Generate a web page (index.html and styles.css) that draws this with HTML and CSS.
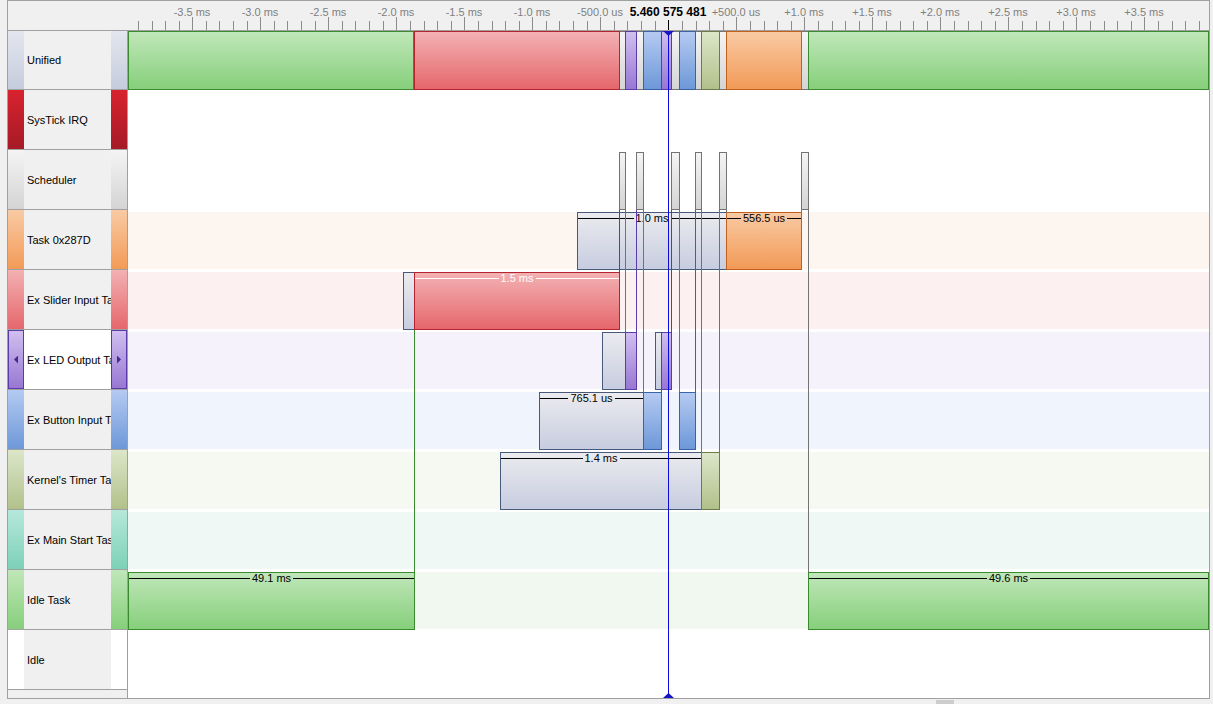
FILE: index.html
```html
<!DOCTYPE html>
<html lang="en">
<head>
  <meta charset="UTF-8" />
  <title>Timeline</title>
  <link rel="stylesheet" href="styles.css">
</head>
<body>
  <div class="frame">
    <div class="ruler">
      <div class="ruler-gap"></div>
      <div class="scale" id="scale">
        <span class="now">5.460 575 481</span>
      </div>
    </div>

    <div class="main">
      <div class="names">
        <div class="name c-unified"><i class="strip"></i><span>Unified</span><i class="strip"></i></div>
        <div class="name c-systick"><i class="strip"></i><span>SysTick IRQ</span><i class="strip"></i></div>
        <div class="name c-sched"><i class="strip"></i><span>Scheduler</span><i class="strip"></i></div>
        <div class="name c-task"><i class="strip"></i><span>Task 0x287D</span><i class="strip"></i></div>
        <div class="name c-slider"><i class="strip"></i><span>Ex Slider Input Task</span><i class="strip"></i></div>
        <div class="name c-led sel"><i class="strip prev"></i><span>Ex LED Output Task</span><i class="strip next"></i></div>
        <div class="name c-button"><i class="strip"></i><span>Ex Button Input Task</span><i class="strip"></i></div>
        <div class="name c-kernel"><i class="strip"></i><span>Kernel's Timer Task</span><i class="strip"></i></div>
        <div class="name c-main"><i class="strip"></i><span>Ex Main Start Task</span><i class="strip"></i></div>
        <div class="name c-idletask"><i class="strip"></i><span>Idle Task</span><i class="strip"></i></div>
        <div class="name c-idle"><i class="strip"></i><span>Idle</span><i class="strip"></i></div>
        <div class="name-foot"></div>
      </div>

      <div class="chart">
        <!-- unified -->
        <div class="lane">
          <i class="bar c-sched" style="left:491px;width:7px"></i>
          <i class="bar c-sched" style="left:508px;width:8px"></i>
          <i class="bar c-sched" style="left:543px;width:9px"></i>
          <i class="bar c-sched" style="left:567px;width:7px"></i>
          <i class="bar c-sched" style="left:591px;width:8px"></i>
          <i class="bar c-sched" style="left:673px;width:8px"></i>
          <i class="bar c-idletask" style="left:0;width:286px"></i>
          <i class="bar c-slider" style="left:286px;width:206px"></i>
          <i class="bar c-led" style="left:497px;width:12px"></i>
          <i class="bar c-button" style="left:515px;width:19px"></i>
          <i class="bar c-led" style="left:533px;width:11px"></i>
          <i class="bar c-button" style="left:551px;width:17px"></i>
          <i class="bar c-kernel" style="left:573px;width:19px"></i>
          <i class="bar c-task" style="left:598px;width:76px"></i>
          <i class="bar c-idletask" style="left:680px;width:401px"></i>
        </div>
        <!-- systick -->
        <div class="lane c-systick"></div>
        <!-- scheduler -->
        <div class="lane">
          <i class="bar c-sched" style="left:491px;width:7px"></i>
          <i class="bar c-sched" style="left:508px;width:8px"></i>
          <i class="bar c-sched" style="left:543px;width:9px"></i>
          <i class="bar c-sched" style="left:567px;width:7px"></i>
          <i class="bar c-sched" style="left:591px;width:8px"></i>
          <i class="bar c-sched" style="left:673px;width:8px"></i>
        </div>
        <!-- task 0x287D -->
        <div class="lane c-task">
          <div class="tint"></div>
          <i class="bar ready" style="left:449px;width:150px"><b class="dur"><span>1.0 ms</span></b></i>
          <i class="bar c-task" style="left:598px;width:76px"><b class="dur"><span>556.5 us</span></b></i>
        </div>
        <!-- slider -->
        <div class="lane c-slider">
          <div class="tint"></div>
          <i class="bar ready" style="left:275px;width:12px"></i>
          <i class="bar c-slider" style="left:286px;width:206px"><b class="dur light"><span>1.5 ms</span></b></i>
        </div>
        <!-- led -->
        <div class="lane c-led">
          <div class="tint"></div>
          <i class="bar ready" style="left:474px;width:24px"></i>
          <i class="bar c-led" style="left:497px;width:12px"></i>
          <i class="bar ready" style="left:527px;width:7px"></i>
          <i class="bar c-led" style="left:533px;width:11px"></i>
        </div>
        <!-- button -->
        <div class="lane c-button">
          <div class="tint"></div>
          <i class="bar ready" style="left:411px;width:105px"><b class="dur"><span>765.1 us</span></b></i>
          <i class="bar c-button" style="left:515px;width:19px"></i>
          <i class="bar c-button" style="left:551px;width:17px"></i>
        </div>
        <!-- kernel timer -->
        <div class="lane c-kernel">
          <div class="tint"></div>
          <i class="bar ready" style="left:372px;width:202px"><b class="dur"><span>1.4 ms</span></b></i>
          <i class="bar c-kernel" style="left:573px;width:19px"></i>
        </div>
        <!-- main start -->
        <div class="lane c-main">
          <div class="tint"></div>
        </div>
        <!-- idle task -->
        <div class="lane c-idletask">
          <div class="tint"></div>
          <i class="bar c-idletask" style="left:0;width:287px"><b class="dur"><span>49.1 ms</span></b></i>
          <i class="bar c-idletask" style="left:680px;width:401px"><b class="dur"><span>49.6 ms</span></b></i>
        </div>
        <!-- idle -->
        <div class="lane"></div>
        <div class="lane-foot"></div>

        <!-- context switches -->
        <i class="link c-idletask" style="left:286px;top:299px;height:242px"></i>
        <i class="link c-slider" style="left:491px;top:179px;height:62px"></i>
        <i class="link c-sched" style="left:497px;top:179px;height:122px"></i>
        <i class="link c-led" style="left:508px;top:179px;height:122px"></i>
        <i class="link c-sched" style="left:515px;top:179px;height:182px"></i>
        <i class="link c-button" style="left:533px;top:358px;height:4px"></i>
        <i class="link c-led" style="left:543px;top:179px;height:122px"></i>
        <i class="link c-sched" style="left:551px;top:179px;height:182px"></i>
        <i class="link c-button" style="left:567px;top:179px;height:182px"></i>
        <i class="link c-sched" style="left:573px;top:179px;height:242px"></i>
        <i class="link c-kernel" style="left:591px;top:179px;height:242px"></i>
        <i class="link c-sched" style="left:598px;top:179px;height:3px"></i>
        <i class="link c-task" style="left:673px;top:179px;height:3px"></i>
        <i class="link c-sched" style="left:680px;top:179px;height:362px"></i>

        <div class="cursor"></div>
      </div>
    </div>
  </div>
  <div class="hscroll"><div class="thumb"></div></div>

  <script>
    // ruler: 0.1 ms per minor tick, 136 px per ms
    const scale=document.getElementById("scale");
    const zero=540.3, step=13.6;
    for(let k=-39;k<=39;k++){
      const x=Math.round(zero+k*step);
      const tick=document.createElement("i");
      tick.className="tick"+(k%5===0?" major":"")+(k===0?" cur":"");
      tick.style.left=x+"px";
      scale.appendChild(tick);
      if(k%5===0&&k!==0){
        const ms=k/10;
        const txt=Math.abs(ms)<1?(ms*1000).toFixed(1)+" us":ms.toFixed(1)+" ms";
        const lbl=document.createElement("span");
        lbl.className="lbl";
        lbl.textContent=(k>0?"+":"")+txt;
        lbl.style.left=x+"px";
        scale.appendChild(lbl);
      }
    }
  </script>
</body>
</html>
```

FILE: styles.css
```css
*{box-sizing:border-box;}
body{margin:0;height:704px;overflow:hidden;background:#f0f0f0;font-family:"Liberation Sans",Arial,sans-serif;font-size:11px;color:#000;}
i,b{font-style:normal;font-weight:normal;}

/* task colours */
.c-unified{--hi:#e3e6ef;--lo:#c5ccdc;--bd:#8a93a8;}
.c-systick{--hi:#d8222f;--lo:#a51b26;--bd:#8a1720;}
.c-sched{--hi:#f4f4f4;--lo:#d4d4d4;--bd:#737373;}
.c-task{--hi:#f9caa3;--lo:#f29a57;--bd:#c2601c;--tint:#fdf5ef;}
.c-slider{--hi:#f3b1b3;--lo:#e5676c;--bd:#b52430;--tint:#fcf0f0;}
.c-led{--hi:#d0bfef;--lo:#9877d3;--bd:#5a3ca8;--tint:#f5f2fb;}
.c-button{--hi:#b5caf2;--lo:#6d98d8;--bd:#3a62a8;--tint:#f0f4fc;}
.c-kernel{--hi:#dce6c9;--lo:#b1c18b;--bd:#6d7a4a;--tint:#f6f8f2;}
.c-main{--hi:#b6e8d9;--lo:#7dd1b7;--bd:#3f9a80;--tint:#eff8f5;}
.c-idletask{--hi:#c0e7b9;--lo:#86cf7b;--bd:#3b8a30;--tint:#f1f8f0;}
.c-idle{--hi:#fff;--lo:#fff;--bd:#fff;}
.ready{--hi:#ebebef;--lo:#c7cde0;--bd:#485a7c;}

.frame{margin-left:7px;width:1203px;height:699px;border:1px solid #a0a0a0;background:#fff;display:flex;flex-direction:column;}

/* ruler */
.ruler{height:30px;flex:none;display:flex;background:#f0f0f0;border-bottom:1px solid #a0a0a0;}
.ruler-gap{width:120px;flex:none;}
.scale{flex:1;position:relative;}
.tick{position:absolute;bottom:0;width:1px;height:9px;background:#8c8c8c;}
.tick.major{height:13px;}
.tick.cur{height:10px;background:#000;}
.lbl{position:absolute;top:5px;transform:translateX(-50%);line-height:13px;color:#808080;white-space:nowrap;}
.now{position:absolute;left:540px;top:4px;transform:translateX(-50%);font-size:12px;line-height:14px;font-weight:bold;white-space:nowrap;}

.main{flex:1;display:flex;min-height:0;}

/* names column */
.names{width:120px;flex:none;display:flex;flex-direction:column;background:#f0f0f0;border-right:1px solid #a0a0a0;}
.name{height:60px;flex:none;display:flex;border-bottom:1px solid #a0a0a0;}
.name:first-child{height:59px;}
.name span{flex:1;min-width:0;display:flex;align-items:center;padding-left:3px;overflow:hidden;white-space:nowrap;}
.strip{width:16px;flex:none;display:flex;align-items:center;justify-content:center;background:linear-gradient(var(--hi),var(--lo));}
.sel span{background:#fff;}
.sel .strip{border:1px solid var(--bd);}
.strip.prev::after,.strip.next::after{content:"";width:4px;height:8px;background:#452c8c;}
.strip.prev::after{clip-path:polygon(100% 0,100% 100%,0 50%);}
.strip.next::after{clip-path:polygon(0 0,100% 50%,0 100%);}
.name-foot{flex:1;}

/* chart */
.chart{flex:1;position:relative;display:flex;flex-direction:column;overflow:hidden;}
.lane{height:60px;flex:none;position:relative;padding-top:2px;}
.lane:first-child{height:59px;padding-top:0;}
.lane-foot{flex:1;}
.tint{height:57px;background:var(--tint);}
.bar{position:absolute;top:2px;height:58px;border:1px solid var(--bd);background:linear-gradient(var(--hi),var(--lo));}
.lane:first-child .bar{top:0;height:59px;}
.dur{position:absolute;left:0;right:0;top:-1px;display:flex;align-items:center;line-height:13px;color:#000;white-space:nowrap;}
.dur::before,.dur::after{content:"";flex:1;height:1px;background:currentColor;}
.dur span{padding:0 2px;}
.dur.light{color:#fff;}
.link{position:absolute;width:1px;background:var(--bd);}

.cursor{position:absolute;left:540px;top:0;bottom:0;width:1px;background:#0a0ae0;}
.cursor::before,.cursor::after{content:"";position:absolute;left:-5px;width:11px;height:5px;background:#1414c8;}
.cursor::before{top:0;clip-path:polygon(0 0,100% 0,50% 100%);}
.cursor::after{bottom:0;clip-path:polygon(50% 0,100% 100%,0 100%);}

.hscroll{height:5px;padding:1px 0 0 936px;}
.thumb{width:18px;height:4px;background:#cdcdcd;}
```
